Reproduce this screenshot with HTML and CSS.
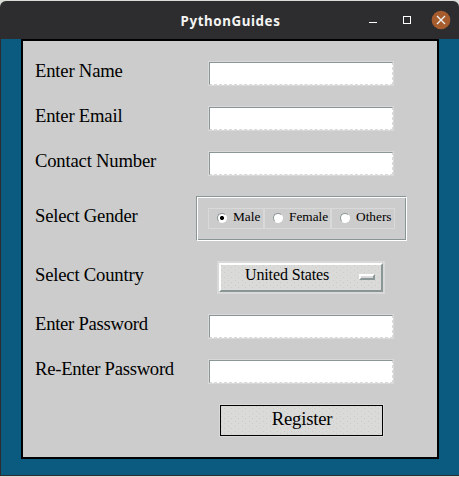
FILE: index.html
```html
<!DOCTYPE html>
<html lang="en">
<head>
<meta charset="utf-8">
<title>PythonGuides</title>
<link rel="stylesheet" href="styles.css">
</head>
<body>
<div class="window">
  <header class="titlebar">
    <h1 class="title">PythonGuides</h1>
    <svg class="controls" width="86" height="20" viewBox="0 0 86 20">
      <path d="M4 12.5h8" stroke="#fff" fill="none"/>
      <rect x="38.5" y="6.5" width="7" height="7" stroke="#fff" fill="none"/>
      <circle cx="76" cy="10" r="9.3" fill="#a75c2e"/>
      <path d="M72 6l8 8M80 6l-8 8" stroke="#eef4f4" stroke-width="1.3" fill="none"/>
    </svg>
  </header>
  <main class="desktop">
    <form class="panel">
      <label class="label" for="name">Enter Name</label><input class="entry" id="name">
      <label class="label" for="email">Enter Email</label><input class="entry" id="email">
      <label class="label" for="contact">Contact Number</label><input class="entry" id="contact">
      <span class="label">Select Gender</span>
      <div class="group">
        <label class="radio male"><i class="dot on"></i><span>Male</span></label>
        <label class="radio female"><i class="dot"></i><span>Female</span></label>
        <label class="radio others"><i class="dot"></i><span>Others</span></label>
      </div>
      <span class="label">Select Country</span>
      <div class="menu"><div class="menu-face"><span class="country">United States</span><i class="handle"></i></div></div>
      <label class="label password" for="pw">Enter Password</label><input class="entry" id="pw" type="password">
      <label class="label password" for="pw2">Re-Enter Password</label><input class="entry" id="pw2" type="password">
      <button class="register" type="button"><span>Register</span></button>
    </form>
  </main>
</div>
</body>
</html>
```

FILE: styles.css
```css
* { box-sizing: border-box; }
body {
  margin: 0;
  width: 459px;
  height: 477px;
  overflow: hidden;
  background: #dadcd8;
  color: #000;
  font-family: "Liberation Serif", serif;
}
.window {
  margin-top: 1px;
  height: 475px;
  border-radius: 6px 6px 0 0;
  overflow: hidden;
  background: #2d2d2f;
}
.titlebar {
  height: 38px;
  display: grid;
  grid-template-columns: 1fr;
  align-items: center;
}
.title {
  grid-area: 1 / 1;
  margin: 0;
  padding: 2px 0 0 2px;
  text-align: center;
  font: bold 13.33px/18px "Noto Sans", sans-serif;
  letter-spacing: 0.6px;
  color: #f4f4f2;
}
.controls {
  grid-area: 1 / 1;
  justify-self: end;
  margin-right: 8px;
}
.desktop {
  height: 436px;
  margin-left: 1px;
  padding-left: 20px;
  background: #0b5a80;
}
.panel {
  width: 418px;
  height: 420px;
  padding: 10px 0 0 12px;
  border: 2px solid #000;
  background: #ccc;
  display: grid;
  grid-template-columns: 161px 211px;
  grid-template-rows: 45px 45px 45px 65px 53px 45px 45px 53px;
  align-items: center;
  align-content: start;
}
.label {
  font-size: 18.67px;
  line-height: 22px;
  letter-spacing: -0.2px;
  padding-bottom: 5px;
  white-space: nowrap;
}
.password { letter-spacing: -0.27px; }
.entry {
  width: 184px;
  height: 23px;
  margin: 0 0 0 13px;
  padding: 0 4px;
  border: 1px solid #8a9696;
  border-right: 1px dashed #d9d9d9;
  border-bottom: 1px dashed #d9d9d9;
  border-radius: 0;
  outline: 1px solid #d9d9d9;
  background: #fff;
}
.group {
  width: 211px;
  height: 45px;
  padding: 11px 0 0 11px;
  display: flex;
  border: 1px solid #8a9696;
  border-right-color: #fff;
  border-bottom-color: #fff;
  box-shadow: inset 1px 1px #fff, inset -1px -1px #8a9696;
}
.radio {
  height: 21px;
  border: 1px solid #d9d9d9;
  display: flex;
  align-items: center;
  padding-left: 8px;
  gap: 6px;
  font-size: 13.33px;
  line-height: 15px;
  white-space: nowrap;
}
.radio span { padding-bottom: 4px; }
.male { width: 56px; }
.female { width: 67px; }
.others { width: 64px; }
.dot {
  flex: none;
  width: 10px;
  height: 10px;
  margin-top: -1px;
  border-radius: 50%;
  background: #fff;
  border: 1px solid #fff;
  border-top-color: #8a9696;
  border-left-color: #8a9696;
}
.on { background: radial-gradient(circle, #000 0 1.8px, #fff 2.3px); }
.menu {
  width: 168px;
  height: 33px;
  margin-left: 21px;
  padding: 2px;
  background: #d9d9d9;
}
.menu-face, .register {
  background: radial-gradient(circle, #ccc 0.5px, transparent 0.8px) 0 0 / 7px 5px,
    radial-gradient(circle, #ccc 0.5px, transparent 0.8px) 4px 3px / 7px 5px,
    #dadad9;
}
.menu-face {
  height: 29px;
  border: 2px solid #fff;
  border-right-color: #8a9696;
  border-bottom-color: #8a9696;
  display: flex;
  align-items: center;
  justify-content: space-between;
  padding: 0 6px 0 24px;
}
.country {
  font-size: 16px;
  line-height: 18px;
  letter-spacing: -0.13px;
  padding-bottom: 5px;
}
.handle {
  width: 16px;
  height: 6px;
  margin-top: -1px;
  border: 2px solid #fff;
  border-right-color: #8a9696;
  border-bottom-color: #8a9696;
  background: #d9d9d9;
}
.register {
  grid-column: 2;
  width: 163px;
  height: 31px;
  margin: 0 0 0 24px;
  padding: 0 0 4px 1px;
  border: 1px solid #000;
  border-radius: 0;
  outline: 1px solid #d9d9d9;
  color: #000;
  font: 18.67px/22px "Liberation Serif", serif;
  letter-spacing: -0.2px;
}
```
